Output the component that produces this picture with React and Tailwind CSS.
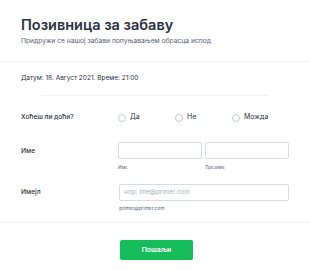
export default function App() {
  return (
    <div
      className="w-[310px] h-[270px] bg-white text-[#2c3345] overflow-hidden"
      style={{ fontFamily: "Inter, 'Noto Sans', sans-serif" }}
    >
      <div className="px-[21px] pt-[16px] h-[62px] border-b border-[#eceef3]">
        <h1 className="text-[14.5px] leading-[18px] font-semibold">
          Позивница за забаву
        </h1>
        <p className="text-[6.7px] leading-[10px] mt-[1.5px] text-[#57647e]">
          Придружи се нашој забави попуњавањем обрасца испод
        </p>
      </div>

      <div className="px-[21px] h-[33px] flex items-center text-[6.5px] text-[#2c3345]">
        Датум: 18. Август 2021. Време: 21:00
      </div>
      <div className="mx-[42px] border-t border-[#f1f2f5]" />

      <div className="flex items-center h-[41px] px-[21px] mt-[1px]">
        <div className="w-[99px] text-[6.6px] font-medium">Хоћеш ли доћи?</div>
        <div className="flex items-center text-[7px] text-[#2c3345]">
          {["Да", "Не", "Можда"].map((label) => (
            <label key={label} className="flex items-center gap-[4px] w-[57px]">
              <span className="w-[8px] h-[8px] rounded-full border border-[#c3cad8] bg-white" />
              <span>{label}</span>
            </label>
          ))}
        </div>
      </div>

      <div className="flex px-[21px] pt-[4px]">
        <div className="w-[99px] text-[6.6px] font-medium pt-[5px]">Име</div>
        <div className="flex gap-[3px]">
          <div className="w-[84px]">
            <div className="h-[17px] border border-[#d8dce4] rounded-[2px]" />
            <div className="text-[4.5px] leading-[7px] text-[#57647e] mt-[4.5px]">Име</div>
          </div>
          <div className="w-[84px]">
            <div className="h-[17px] border border-[#d8dce4] rounded-[2px]" />
            <div className="text-[4.5px] leading-[7px] text-[#57647e] mt-[4.5px]">Презиме</div>
          </div>
        </div>
      </div>

      <div className="flex px-[21px] pt-[13.5px] pb-[10px] border-b border-[#f1f2f5]">
        <div className="w-[99px] text-[6.6px] font-medium pt-[4px]">Имејл</div>
        <div className="w-[171px]">
          <div className="h-[17px] border border-[#d8dce4] rounded-[2px] flex items-center px-[4px] text-[6.3px] text-[#a9b0be]">
            нпр: ime@primer.com
          </div>
          <div className="text-[4.8px] leading-[7px] text-[#57647e] mt-[4px]">primer@primer.com</div>
        </div>
      </div>

      <div className="pl-[120px] pt-[11px]">
        <button className="w-[73px] h-[20px] rounded-[2px] bg-[#18bd5b] text-white text-[6.8px] font-semibold">
          Пошаљи
        </button>
      </div>
    </div>
  );
}
